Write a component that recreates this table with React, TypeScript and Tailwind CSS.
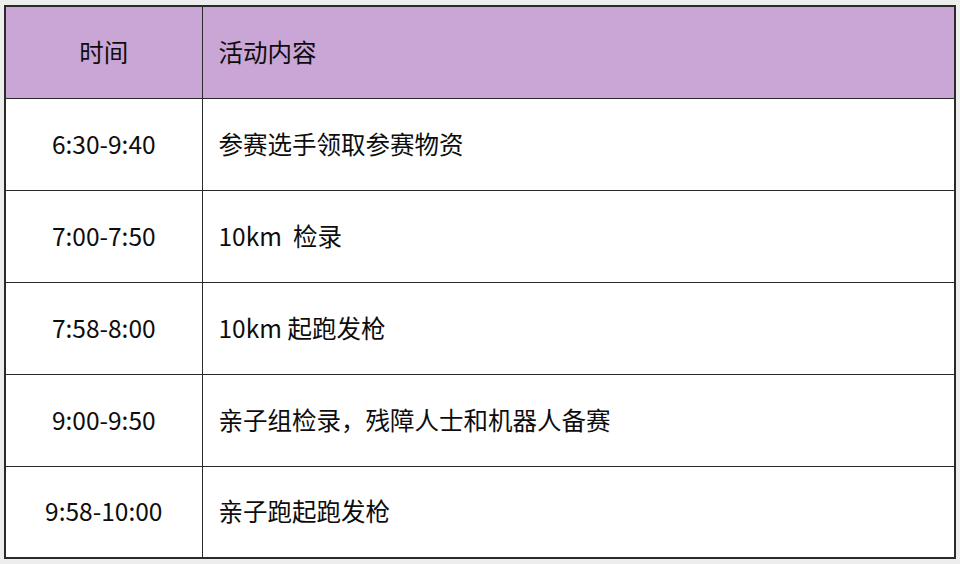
const rows = [
  { time: "6:30-9:40", content: "参赛选手领取参赛物资" },
  { time: "7:00-7:50", content: "10km\u00a0\u00a0检录" },
  { time: "7:58-8:00", content: "10km 起跑发枪" },
  { time: "9:00-9:50", content: "亲子组检录，残障人士和机器人备赛" },
  { time: "9:58-10:00", content: "亲子跑起跑发枪" },
];

const App = () => {
  return (
    <div
      className="w-[960px] h-[564px] bg-[#ededed] pl-[4px] pt-[5px] text-[#0d0d0d] text-[24.5px] font-normal"
      style={{ fontFamily: '"Noto Sans CJK SC", "Noto Sans", sans-serif' }}
    >
      <table className="w-[952px] border-collapse border-2 border-[#2a2a2a] bg-white">
        <thead>
          <tr className="h-[92px] bg-[#caa6d6]">
            <th className="w-[197px] border-[1.5px] border-[#2a2a2a] font-normal text-center">
              时间
            </th>
            <th className="border-[1.5px] border-[#2a2a2a] font-normal text-left pl-[16px]">
              活动内容
            </th>
          </tr>
        </thead>
        <tbody>
          {rows.map((row) => (
            <tr key={row.time} className="h-[92px]">
              <td className="border-[1.5px] border-[#2a2a2a] text-center">
                {row.time}
              </td>
              <td className="border-[1.5px] border-[#2a2a2a] text-left pl-[16px]">
                {row.content}
              </td>
            </tr>
          ))}
        </tbody>
      </table>
    </div>
  );
};

export default App;
